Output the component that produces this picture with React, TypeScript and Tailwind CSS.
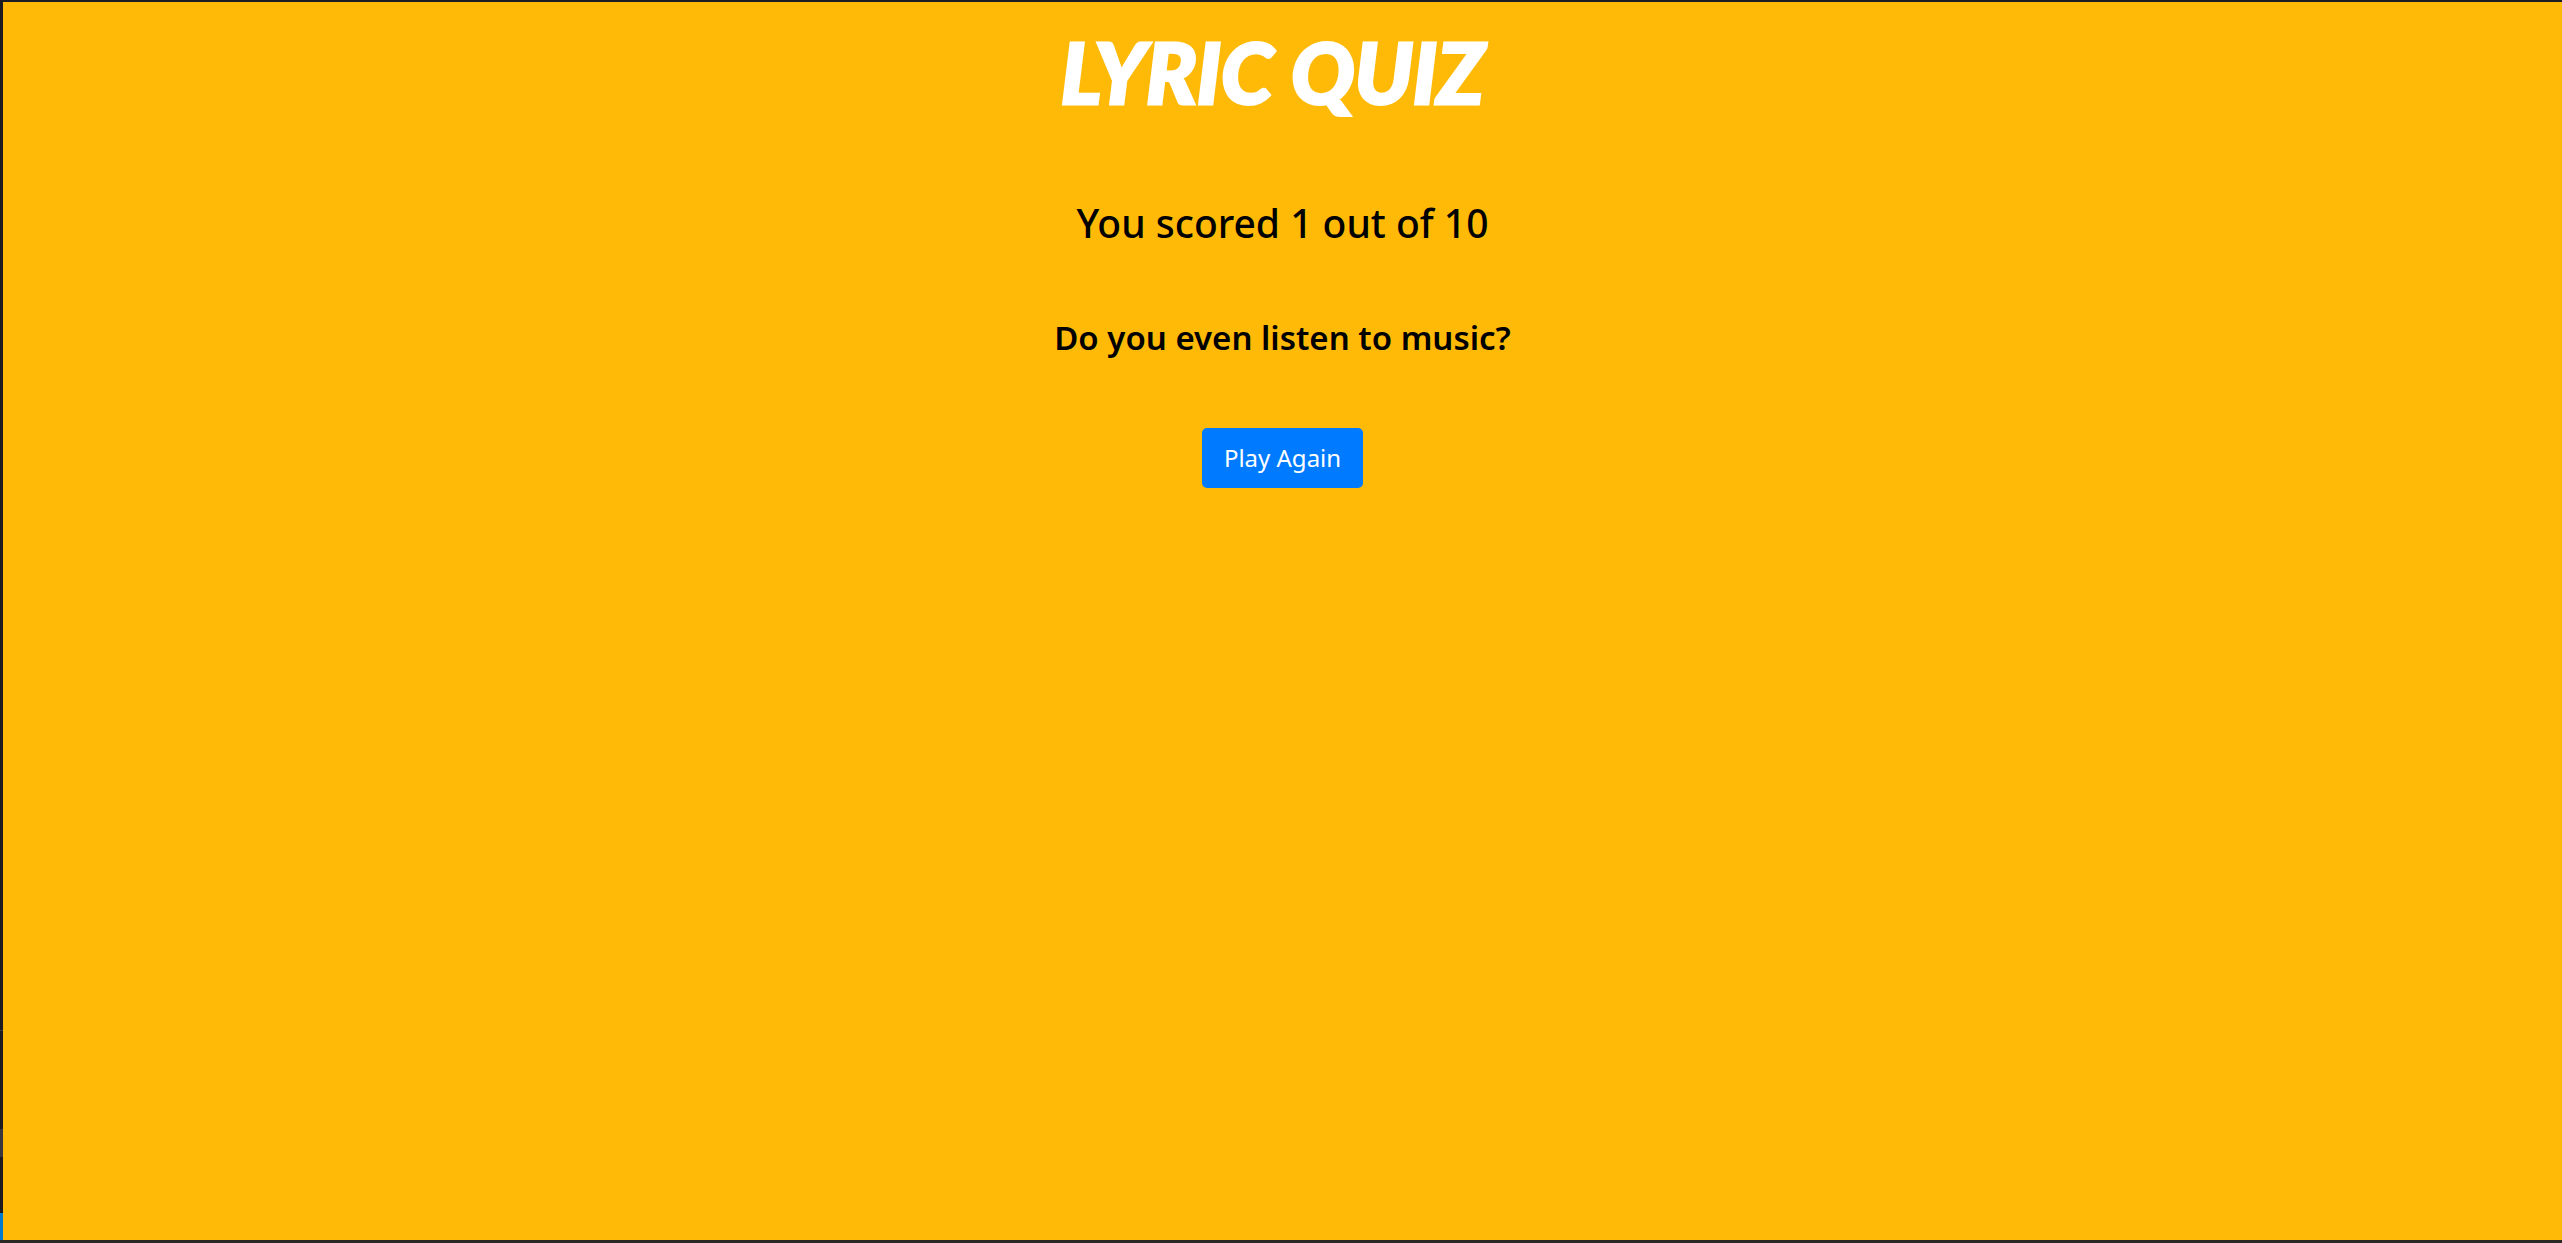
export default function App() {
  return (
    <div className="flex h-screen border-t-2 border-b-3 border-t-[#1c1c24] border-b-[#2b2926] bg-[#ffba08] font-['Noto_Sans',sans-serif] text-black">
      <aside aria-hidden="true" className="flex w-[3px] shrink-0 flex-col bg-[#1c1c20]">
        <div className="mt-auto h-px bg-[#3c3c41]" />
        <div className="mt-[98px] h-7 bg-[#37373d]" />
        <div className="mt-14 h-[27px] bg-[#007acc]" />
      </aside>
      <main className="flex flex-1 flex-col items-center pt-[22px]">
        <h1 className="pr-5 font-[Lato,sans-serif] text-[84px] leading-24 font-black text-white italic [-webkit-text-stroke:3px_white]">
          LYRIC QUIZ
        </h1>
        <h2 className="mt-[79px] text-[39px] leading-12 font-medium">You scored 1 out of 10</h2>
        <h3 className="mt-[71px] text-[33px] leading-10 font-semibold">Do you even listen to music?</h3>
        <button
          type="button"
          className="mt-[70px] cursor-pointer rounded-[5px] bg-[#007bff] px-[22px] py-3 text-2xl leading-9 text-white"
        >
          Play Again
        </button>
      </main>
    </div>
  );
}
